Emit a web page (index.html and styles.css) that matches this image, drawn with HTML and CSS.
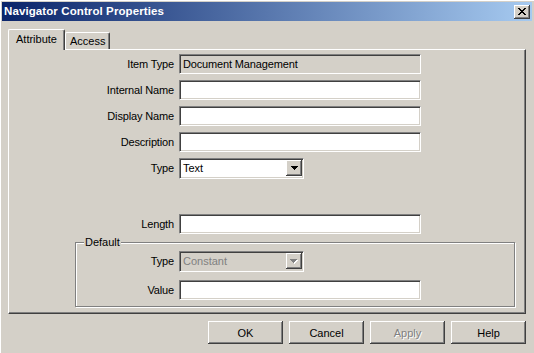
FILE: index.html
```html
<!DOCTYPE html>
<html lang="en">
<head>
    <meta charset="UTF-8">
    <title>Navigator Control Properties</title>
    <link rel="stylesheet" href="styles.css">
</head>
<body>
    <div class="window">
        <div class="titlebar">
            <span class="title">Navigator Control Properties</span>
            <div class="close-btn">
                <svg width="8" height="7" viewBox="0 0 8 7" shape-rendering="crispEdges">
                    <path fill="#000" d="M0 0h2v1H0z M6 0h2v1H6z M1 1h2v1H1z M5 1h2v1H5z M2 2h4v1H2z M3 3h2v1H3z M2 4h4v1H2z M1 5h2v1H1z M5 5h2v1H5z M0 6h2v1H0z M6 6h2v1H6z"/>
                </svg>
            </div>
        </div>

        <div class="dialog">
            <div class="tabs">
                <div class="tab active">Attribute</div>
                <div class="tab">Access</div>
            </div>

            <div class="tab-page">
                <div class="form-row">
                    <span class="form-label">Item Type</span>
                    <div class="textbox readonly">Document Management</div>
                </div>
                <div class="form-row">
                    <span class="form-label">Internal Name</span>
                    <div class="textbox"></div>
                </div>
                <div class="form-row">
                    <span class="form-label">Display Name</span>
                    <div class="textbox"></div>
                </div>
                <div class="form-row">
                    <span class="form-label">Description</span>
                    <div class="textbox"></div>
                </div>
                <div class="form-row">
                    <span class="form-label">Type</span>
                    <div class="select">
                        <span class="select-value">Text</span>
                        <span class="select-btn">
                            <svg width="7" height="4" viewBox="0 0 7 4" shape-rendering="crispEdges">
                                <path fill="#000" d="M0 0h7v1H0z M1 1h5v1H1z M2 2h3v1H2z M3 3h1v1H3z"/>
                            </svg>
                        </span>
                    </div>
                </div>
                <div class="form-row length-row">
                    <span class="form-label">Length</span>
                    <div class="textbox"></div>
                </div>

                <div class="group">
                    <span class="group-title">Default</span>
                    <div class="form-row group-first">
                        <span class="form-label group-label">Type</span>
                        <div class="select disabled">
                            <span class="select-value">Constant</span>
                            <span class="select-btn">
                                <svg width="8" height="5" viewBox="0 0 8 5" shape-rendering="crispEdges">
                                    <path fill="#fff" d="M1 1h7v1H1z M2 2h5v1H2z M3 3h3v1H3z M4 4h1v1H4z"/>
                                    <path fill="#808080" d="M0 0h7v1H0z M1 1h5v1H1z M2 2h3v1H2z M3 3h1v1H3z"/>
                                </svg>
                            </span>
                        </div>
                    </div>
                    <div class="form-row group-row">
                        <span class="form-label group-label">Value</span>
                        <div class="textbox"></div>
                    </div>
                </div>
            </div>

            <div class="buttons">
                <button class="btn">OK</button>
                <button class="btn">Cancel</button>
                <button class="btn" disabled>Apply</button>
                <button class="btn">Help</button>
            </div>
        </div>
    </div>
</body>
</html>
```

FILE: styles.css
```css
* {
    margin: 0;
    padding: 0;
    box-sizing: border-box;
}

body {
    background: #d4d0c8;
    font-family: "Liberation Sans", Arial, sans-serif;
    font-size: 11px;
    line-height: 13px;
    color: #000;
}

.window {
    width: 534px;
    height: 353px;
    padding: 2px;
    background: #d4d0c8;
    box-shadow: inset 1px 1px #fff;
}

.titlebar {
    display: flex;
    align-items: center;
    justify-content: space-between;
    height: 19px;
    padding: 0 2px 0 2px;
    background: linear-gradient(to right, #0a246a, #a6caf0);
}

.title {
    color: #fff;
    font-weight: bold;
    font-size: 11.5px;
    letter-spacing: 0.1px;
}

.close-btn {
    width: 16px;
    height: 14px;
    display: flex;
    align-items: center;
    justify-content: center;
    background: #d4d0c8;
    box-shadow: inset -1px -1px #404040, inset 1px 1px #fff, inset -2px -2px #808080;
}

.close-btn svg {
    display: block;
}

.dialog {
    padding: 8px 6px 0;
}

.tabs {
    display: flex;
    align-items: flex-end;
    height: 20px;
}

.tab {
    height: 17px;
    padding: 2px 4px 0 4px;
    border-top: 1px solid #fff;
    border-left: 1px solid #fff;
    border-right: 1px solid #404040;
    border-radius: 2px 2px 0 0;
    box-shadow: inset -1px 0 #808080;
    background: #d4d0c8;
}

.tab.active {
    position: relative;
    z-index: 1;
    height: 21px;
    margin-bottom: -1px;
    padding: 3px 7px 0 7px;
}

.tab-page {
    height: 265px;
    padding-top: 4px;
    border: 1px solid;
    border-color: #fff #404040 #404040 #fff;
    box-shadow: inset -1px -1px #808080;
}

.form-row {
    display: flex;
    align-items: center;
    height: 20px;
    margin-top: 6px;
}

.form-row:first-child {
    margin-top: 0;
}

.form-label {
    width: 165px;
    margin-right: 5px;
    text-align: right;
    letter-spacing: -0.15px;
}

.textbox {
    width: 242px;
    height: 20px;
    padding: 0 3px;
    line-height: 18px;
    background: #fff;
    border: 1px solid;
    border-color: #808080 #fff #fff #808080;
    box-shadow: inset 1px 1px #404040, inset -1px -1px #d4d0c8;
}

.textbox.readonly {
    background: #d4d0c8;
    letter-spacing: -0.15px;
}

.select {
    display: flex;
    align-items: center;
    width: 125px;
    height: 21px;
    padding: 2px;
    background: #fff;
    border: 1px solid;
    border-color: #808080 #fff #fff #808080;
    box-shadow: inset 1px 1px #404040, inset -1px -1px #d4d0c8;
}

.select-value {
    flex: 1;
    padding-left: 1px;
}

.select-btn {
    width: 16px;
    height: 16px;
    margin-right: -1px;
    display: flex;
    align-items: center;
    justify-content: center;
    background: #d4d0c8;
    box-shadow: inset -1px -1px #404040, inset 1px 1px #fff, inset -2px -2px #808080;
}

.select-btn svg {
    display: block;
}

.select.disabled {
    background: #d4d0c8;
}

.select.disabled .select-value {
    color: #808080;
}

.length-row {
    margin-top: 36px;
}

.group {
    display: flex;
    flex-direction: column;
    margin: 8px 10px 0 66px;
    padding-bottom: 6px;
    border: 1px solid #808080;
    box-shadow: inset 1px 1px #fff, 1px 1px #fff;
}

.group-title {
    align-self: flex-start;
    margin: -7px 0 0 8px;
    padding: 0 1px;
    background: #d4d0c8;
}

.form-row.group-first {
    margin-top: 2px;
}

.form-row.group-row {
    margin-top: 9px;
}

.group-label {
    width: 98px;
}

.buttons {
    display: flex;
    justify-content: flex-end;
    gap: 6px;
    margin-top: 7px;
}

.btn {
    width: 75px;
    height: 23px;
    border: none;
    background: #d4d0c8;
    font-family: "Liberation Sans", Arial, sans-serif;
    font-size: 11px;
    color: #000;
    box-shadow: inset -1px -1px #404040, inset 1px 1px #fff, inset -2px -2px #808080;
}

.btn:disabled {
    color: #808080;
    text-shadow: 1px 1px #fff;
}
```
